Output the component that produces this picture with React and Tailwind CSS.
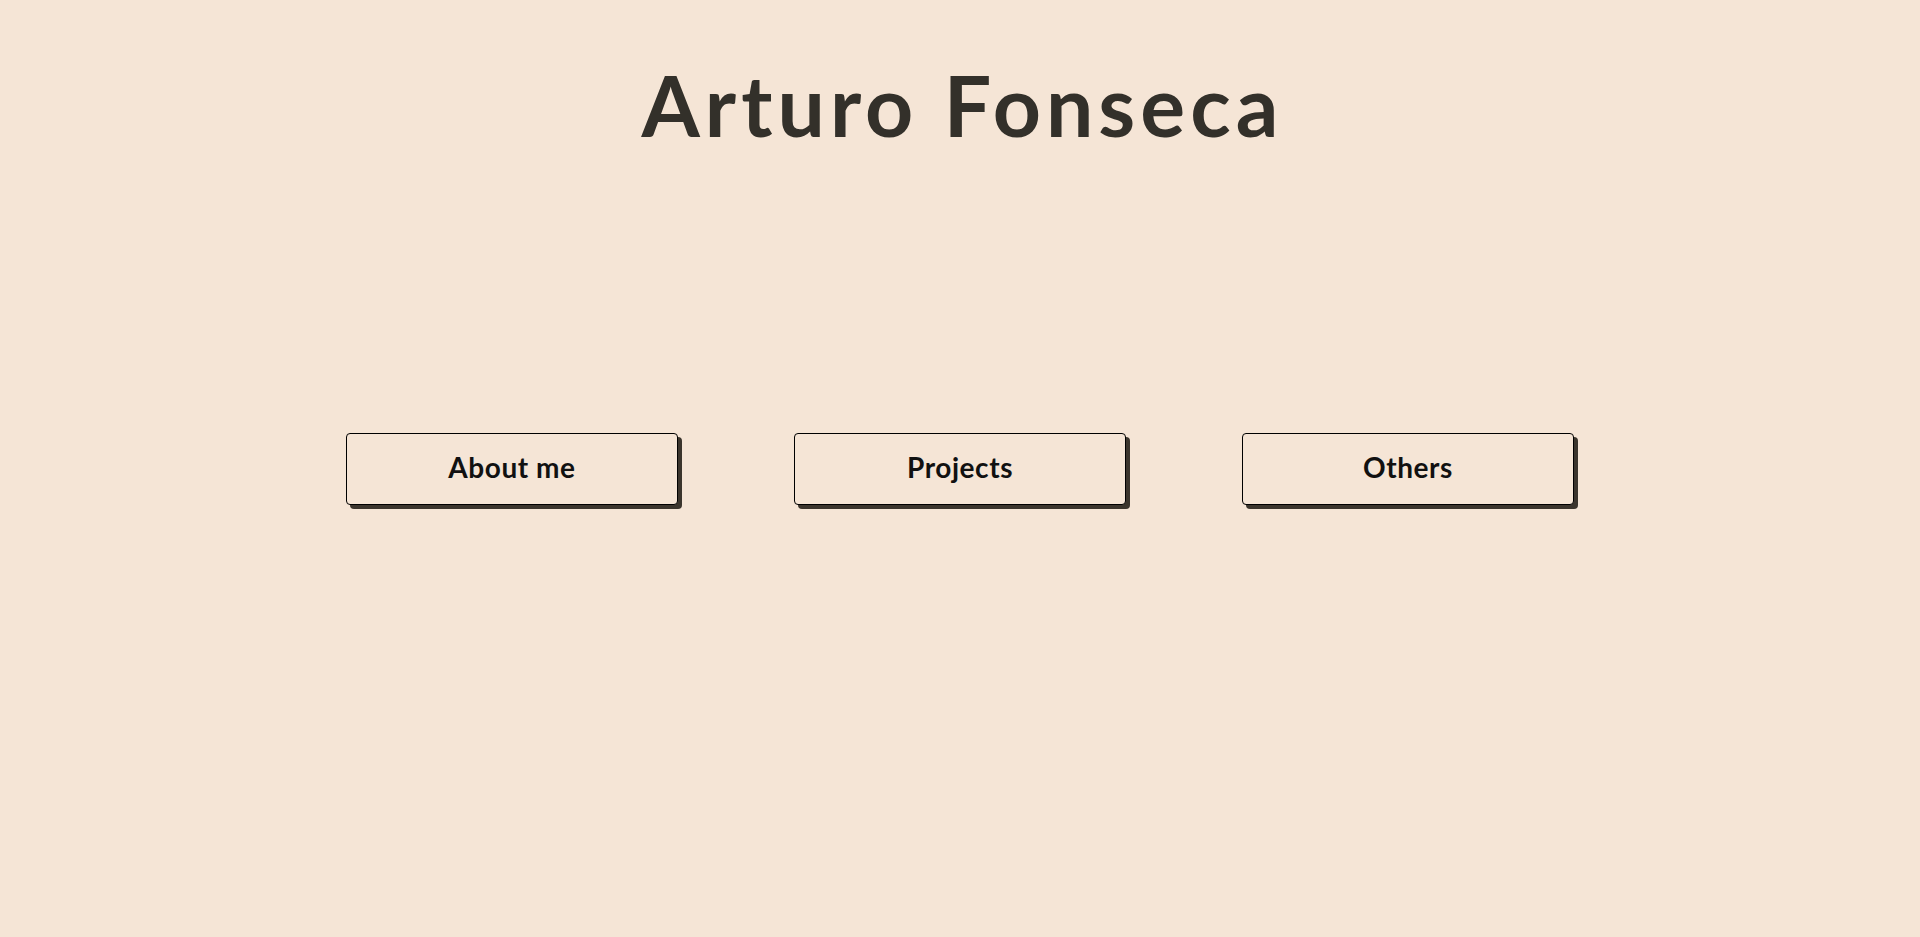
import React from "react";

const links = ["About me", "Projects", "Others"];

const App = () => {
    return (
        <div className="min-h-[937px] w-full bg-[#f5e5d6] font-['Lato',sans-serif] flex flex-col items-center pt-[63px]">
            <h1 className="text-[84px] leading-none font-bold tracking-[0.06em] text-[#33302a] pl-[0.06em]">
                Arturo Fonseca
            </h1>

            <div className="mt-[286px] flex gap-[116px] justify-center">
                {links.map((label) => (
                    <button
                        key={label}
                        className="w-[332px] h-[72px] pb-[5px] bg-[#f5e5d6] border border-black rounded-[4px] shadow-[4px_4px_0_#3b352d] text-[28px] font-bold tracking-[0.02em] text-[#111]"
                    >
                        {label}
                    </button>
                ))}
            </div>
        </div>
    );
};

export default App;
